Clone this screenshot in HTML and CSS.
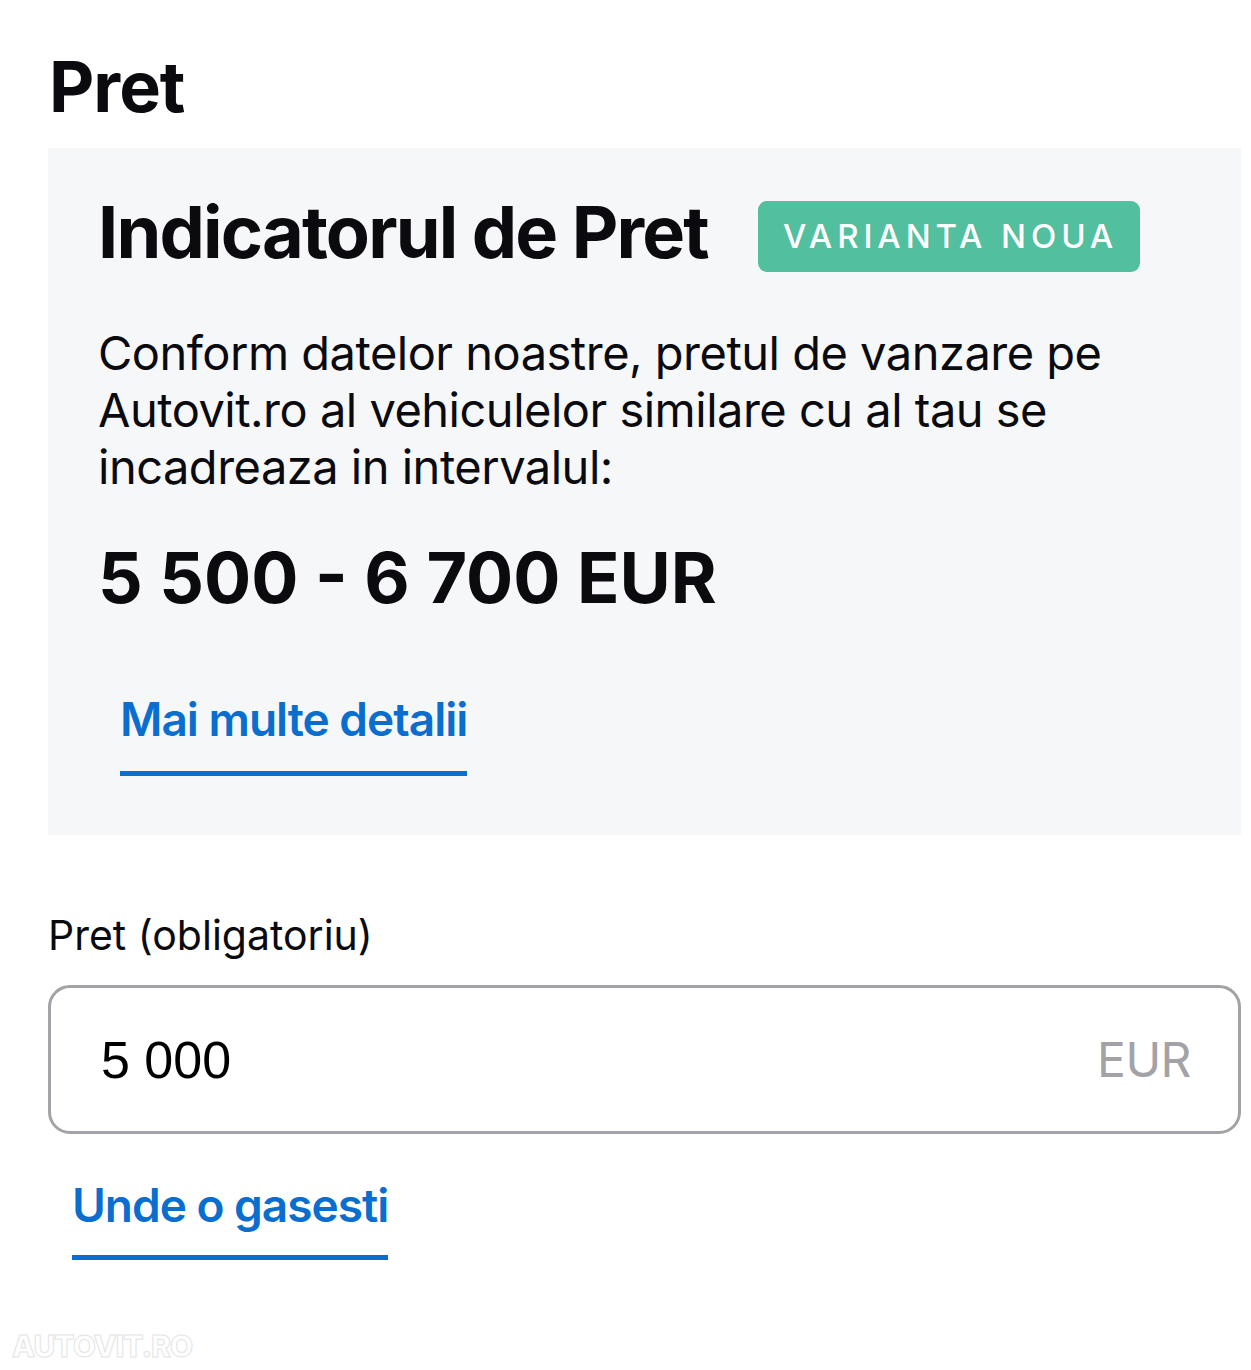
FILE: index.html
```html
<!DOCTYPE html>
<html lang="ro">
<head>
<meta charset="utf-8">
<title>Pret</title>
<link rel="stylesheet" href="styles.css">
</head>
<body>
<main class="page">
  <h1 class="title">Pret</h1>
  <section class="indicator">
    <div class="indicator-head">
      <h2 class="indicator-title">Indicatorul de Pret</h2>
      <span class="badge">VARIANTA NOUA</span>
    </div>
    <p class="indicator-text">Conform datelor noastre, pretul de vanzare pe Autovit.ro al vehiculelor similare cu al tau se incadreaza in intervalul:</p>
    <div class="range">5 500 - 6 700 EUR</div>
    <a class="link link-details" href="#">Mai multe detalii</a>
  </section>
  <label class="field-label" for="price">Pret (obligatoriu)</label>
  <div class="field">
    <input id="price" class="field-input" type="text" value="5 000">
    <span class="field-suffix">EUR</span>
  </div>
  <a class="link link-where" href="#">Unde o gasesti</a>
  <div class="watermark">AUTOVIT.RO</div>
</main>
</body>
</html>
```
FILE: styles.css
```css
* { box-sizing: border-box; }
html, body { margin: 0; padding: 0; background: #fff; }
body { font-family: Inter, "Noto Sans", sans-serif; color: #0b0b0f; width: 1251px; height: 1370px; overflow: hidden; }
.page { padding: 44px 10px 0 48px; display: flex; flex-direction: column; align-items: flex-start; position: relative; height: 1370px; }
.title { margin: 0 0 18px 1px; font-size: 70px; font-weight: 700; line-height: 86px; letter-spacing: -1px; }
.indicator { align-self: stretch; background: #f6f7f9; padding: 44px 40px 59px 50px; display: flex; flex-direction: column; align-items: flex-start; }
.indicator-head { display: flex; align-items: center; gap: 50px; }
.indicator-title { margin: 0; font-size: 72px; font-weight: 700; letter-spacing: -1.8px; line-height: 80px; }
.badge { margin-top: 9px; background: #52bf9e; color: #fff; border-radius: 9px; font-size: 33px; letter-spacing: 4.9px; padding: 14px 22px 14px 25px; line-height: 43px; font-weight: 500; }
.indicator-text { margin: 52px 0 0; font-size: 47px; line-height: 57px; font-weight: 400; letter-spacing: -0.5px; max-width: 1060px; }
.range { margin-top: 38px; font-size: 70px; font-weight: 700; line-height: 90px; letter-spacing: 0; }
.link { color: #0a6ecf; text-decoration: none; font-weight: 600; border-bottom: 5px solid #0a6ecf; }
.link-details { margin: 65px 0 0 22px; font-size: 46px; line-height: 62px; padding-bottom: 21px; letter-spacing: -1px; }
.field-label { margin: 72px 0 0 0; font-size: 41px; line-height: 56px; }
.field { align-self: stretch; margin-top: 22px; height: 149px; border: 3px solid #a2a2a7; border-radius: 22px; display: flex; align-items: center; padding: 0 47px 0 50px; }
.field-input { flex: 1; border: 0; outline: 0; background: transparent; font-family: "Liberation Sans", Arial, sans-serif; font-size: 52px; color: #000; padding: 0; }
.field-suffix { font-family: Inter, "Liberation Sans", Arial, sans-serif; font-size: 48px; color: #a2a2a7; letter-spacing: -0.5px; }
.link-where { margin: 40px 0 0 24px; font-size: 46px; line-height: 62px; padding-bottom: 19px; letter-spacing: -1px; }
.watermark { position: absolute; left: 12px; top: 1328px; font-size: 30px; font-weight: 800; color: #fff; -webkit-text-stroke: 1px #e4e4e4; letter-spacing: -1px; }
```
